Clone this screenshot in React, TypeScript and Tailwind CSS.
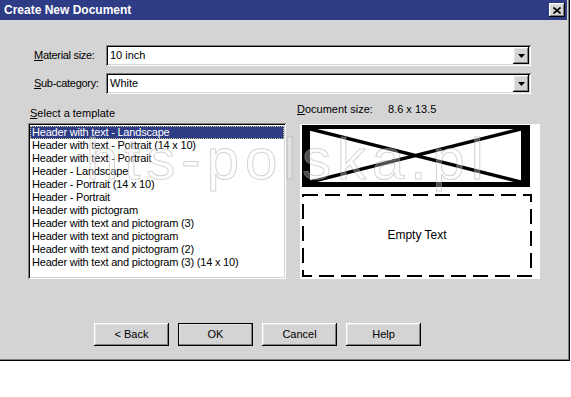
import React from 'react';

const templates = [
  'Header with text - Landscape',
  'Header with text - Portrait (14 x 10)',
  'Header with text - Portrait',
  'Header - Landscape',
  'Header - Portrait (14 x 10)',
  'Header - Portrait',
  'Header with pictogram',
  'Header with text and pictogram (3)',
  'Header with text and pictogram',
  'Header with text and pictogram (2)',
  'Header with text and pictogram (3) (14 x 10)',
];

const raised =
  'shadow-[inset_-1px_-1px_0_#000,inset_1px_1px_0_#fff,inset_-2px_-2px_0_#808080,inset_2px_2px_0_#e4e4e4]';
const sunken =
  'shadow-[inset_1px_1px_0_#808080,inset_-1px_-1px_0_#fff,inset_2px_2px_0_#000,inset_-2px_-2px_0_#d4d4d4]';

function Mnemonic({ text }: { text: string }) {
  return (
    <span>
      <u className="underline-offset-[1px]">{text[0]}</u>
      {text.slice(1)}
    </span>
  );
}

function ComboRow({ label, value, className = '' }: { label: string; value: string; className?: string }) {
  return (
    <div className={`flex items-center h-[21px] ${className}`}>
      <div className="w-[78px] pl-[6px] tracking-[-0.3px] whitespace-nowrap">
        <Mnemonic text={label} />
      </div>
      <div className={`w-[425px] h-[21px] bg-white flex items-center justify-between pl-[4px] pr-[2px] ${sunken}`}>
        <span>{value}</span>
        <div className={`w-[16px] h-[17px] bg-[#d4d4d4] flex items-center justify-center ${raised}`}>
          <svg width="7" height="4" viewBox="0 0 7 4">
            <path d="M0 0h7L3.5 4z" fill="#000" />
          </svg>
        </div>
      </div>
    </div>
  );
}

function DialogButton({ label, isDefault }: { label: string; isDefault?: boolean }) {
  return (
    <div
      className={`w-[75px] h-[23px] bg-[#d4d4d4] flex items-center justify-center ${raised} ${
        isDefault ? 'outline outline-1 outline-black -outline-offset-1' : ''
      }`}
    >
      {label}
    </div>
  );
}

export default function App() {
  return (
    <div className="w-[571px] h-[397px] bg-white font-['Liberation_Sans',Arial,sans-serif] text-[11px] leading-[13px] text-black">
      <div className="relative w-[570px] h-[361px] bg-[#d4d4d4] shadow-[inset_-1px_-1px_0_#000,inset_-2px_-2px_0_#808080] overflow-hidden">
        {/* title bar */}
        <div className="w-[567px] h-[20px] bg-[#2e3b85] flex items-center justify-between pl-[4px] pr-[2px]">
          <span className="text-white font-bold text-[12px]">Create New Document</span>
          <div className={`w-[16px] h-[14px] bg-[#d4d4d4] flex items-center justify-center ${raised}`}>
            <svg width="8" height="7" viewBox="0 0 8 7">
              <path d="M0.5 0.5L7.5 6.5M7.5 0.5L0.5 6.5" stroke="#000" strokeWidth="1.6" />
            </svg>
          </div>
        </div>

        <div className="pl-[28px] pt-[25px]">
          <ComboRow label="Material size:" value="10 inch" />
          <ComboRow label="Sub-category:" value="White" className="mt-[7px]" />

          <div className="flex">
            <div className="w-[258px] mt-[13px]">
              <div className="pl-[2px]">
                <Mnemonic text="Select a template" />
              </div>
              <div className={`mt-[3px] h-[156px] bg-white pt-[3px] px-[2px] ${sunken}`}>
                {templates.map((t, i) => (
                  <div
                    key={t}
                    className={`h-[13px] pl-[2px] whitespace-nowrap tracking-[-0.2px] ${
                      i === 0 ? 'bg-[#2e3b85] text-white outline outline-1 outline-dotted outline-[#c8c890] -outline-offset-1' : ''
                    }`}
                  >
                    {t}
                  </div>
                ))}
              </div>
            </div>

            <div className="ml-[11px] mt-[9px]">
              <div className="flex">
                <div className="w-[91px]">
                  <Mnemonic text="Document size:" />
                </div>
                <span>8.6 x 13.5</span>
              </div>
              <div className="mt-[8px] ml-[3px] w-[240px] h-[155px] bg-white pl-[2px] pt-[1px]">
                <div className="relative w-[228px] h-[62px] border-black border-l-[8px] border-r-[9px] border-t-[4px] border-b-[5px]">
                  <svg className="absolute inset-0 w-full h-full" viewBox="0 0 100 100" preserveAspectRatio="none">
                    <path d="M0 0L100 100M100 0L0 100" stroke="#000" strokeWidth="3.5" vectorEffect="non-scaling-stroke" />
                  </svg>
                </div>
                <div className="relative mt-[7px] w-[230px] h-[83px] flex items-center justify-center text-[12px]">
                  <svg className="absolute inset-0" width="230" height="83">
                    <rect x="1" y="1" width="228" height="81" fill="none" stroke="#000" strokeWidth="2" strokeDasharray="15 7" />
                  </svg>
                  <span className="relative">Empty Text</span>
                </div>
              </div>
            </div>
          </div>

          <div className="flex gap-[9px] ml-[66px] mt-[44px]">
            <DialogButton label="< Back" />
            <DialogButton label="OK" isDefault />
            <DialogButton label="Cancel" />
            <DialogButton label="Help" />
          </div>
        </div>

        {/* watermark of the source picture */}
        <div className="pointer-events-none absolute left-[86px] top-[130px] text-[58px] leading-none tracking-[6px] text-white/30 [-webkit-text-stroke:1px_rgba(160,160,160,0.45)]">
          hts-polska.pl
        </div>
      </div>
    </div>
  );
}
